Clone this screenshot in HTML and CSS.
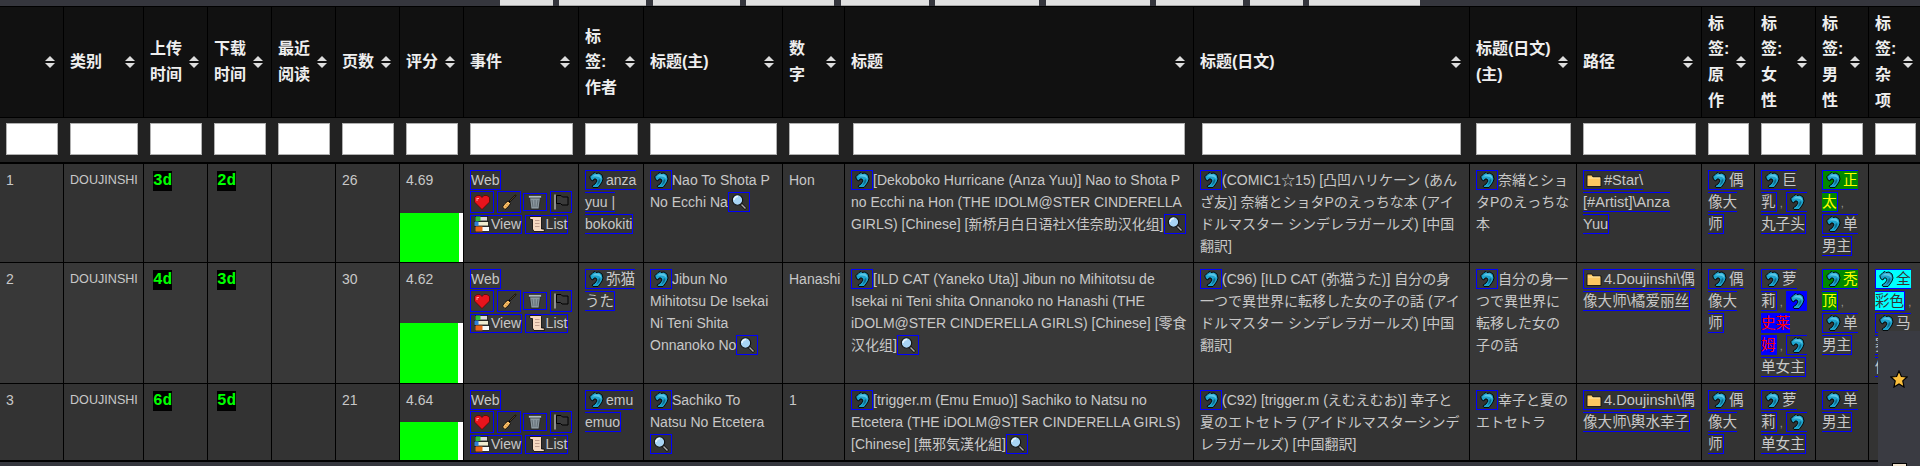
FILE: index.html
```html
<!DOCTYPE html>
<html lang="zh">

<head>
    <meta charset="UTF-8">
    <title>manga list</title>
    <link rel="stylesheet" href="styles.css">
</head>

<body>

    <svg class="defs" xmlns="http://www.w3.org/2000/svg">
        <symbol id="dolphin" viewBox="0 0 16 16">
            <path d="M2 4.5 L5 1.5 L7 0.5 L8 1.5 L11 1 L14 3 L15 7 L14 10 L12 13 L10 15.5 L5 15.5 L4 14 L7 12 L9 9 L8 7 L6 7 L5 9 L3 8 L2 6 Z" fill="#1da3cc" stroke="#000" stroke-width="0.9"/>
            <path d="M4 4.5 L7 2.5 L11 2.5 L13 4.5 L13.5 7 L11 5 L8 4.5 Z" fill="#5cc6e6"/>
            <path d="M11 7 L12.5 8 L11.5 11 L8.5 13.5 L10 10 Z" fill="#0d6a8c"/>
        </symbol>
        <symbol id="mag" viewBox="0 0 16 16">
            <circle cx="6.5" cy="6" r="5.2" fill="#a8d4f4" stroke="#111" stroke-width="1.1"/>
            <path d="M3 6 A3.5 3.5 0 0 1 7 2.5" fill="none" stroke="#eaf7ff" stroke-width="1.5"/>
            <path d="M10 10 L15 15" stroke="#111" stroke-width="3"/>
            <path d="M10.5 10.5 L14.5 14.5" stroke="#aaa" stroke-width="1.4"/>
        </symbol>
        <symbol id="heart" viewBox="0 0 16 16">
            <path d="M8 15.5 L0.5 8 V3.5 L3 1.5 H6 L8 3.5 L10 1.5 H13 L15.5 3.5 V8 Z" fill="#e8141c" stroke="#500" stroke-width="0.7"/>
            <path d="M2.5 4 H5 V5 H3.5 V7 H2.5 Z" fill="#ff9a9a"/>
        </symbol>
        <symbol id="broom" viewBox="0 0 16 16">
            <path d="M15 1 L8 8" stroke="#000" stroke-width="1.6"/>
            <path d="M14.5 1.5 L9 7" stroke="#8a6a38" stroke-width="0.6"/>
            <path d="M7 7 L9.5 9.5 L7 13 L4 15.5 L1.5 13 L4 9.5 Z" fill="#f8bc66" stroke="#000" stroke-width="0.8"/>
            <path d="M5.5 10 L7 11.5 M4.5 12 L5.5 13.5" stroke="#b87c28" stroke-width="0.8"/>
        </symbol>
        <symbol id="trash" viewBox="0 0 16 16">
            <path d="M2.5 3 H13.5 L12 15 H4 Z" fill="#8b989f" stroke="#222" stroke-width="0.8"/>
            <path d="M1.5 1.5 H14.5 V4 H1.5 Z" fill="#aeb9be" stroke="#222" stroke-width="0.6"/>
            <path d="M5 6 L6 13 M8 6 V13 M11 6 L10 13" stroke="#5c686f" stroke-width="0.9"/>
        </symbol>
        <symbol id="flag" viewBox="0 0 16 16">
            <path d="M2 0.5 V15.5" stroke="#c4c4c4" stroke-width="1.3"/>
            <path d="M3.5 1.5 H8 L9.5 3 H15 V11 H9 L7.5 9.5 H3.5 Z" fill="#3a3a3a" stroke="#000" stroke-width="1"/>
        </symbol>
        <symbol id="books" viewBox="0 0 16 16">
            <rect x="1.5" y="0.5" width="12" height="4.5" fill="#d8d8d8" stroke="#000" stroke-width="0.7"/>
            <rect x="1.5" y="0.5" width="5" height="4.5" fill="#2fb83a"/>
            <rect x="0.5" y="5.5" width="14" height="4.5" fill="#f0ecd0" stroke="#000" stroke-width="0.7"/>
            <rect x="0.5" y="5.5" width="4" height="4.5" fill="#2f7fd8"/>
            <rect x="1.5" y="10.5" width="14" height="5" fill="#f8f8f8" stroke="#000" stroke-width="0.7"/>
            <rect x="1.5" y="10.5" width="7" height="5" fill="#ea641c"/>
        </symbol>
        <symbol id="scroll" viewBox="0 0 16 16">
            <path d="M1 0.5 H12 L12.5 1.5 V13 H15 L15.5 15.5 H5 L3.5 13 V3.5 H1.5 L0.5 2 Z" fill="#f6d9c2" stroke="#000" stroke-width="0.8"/>
            <path d="M6 4.5 H10.5 M6 7.5 H10.5 M6 10.5 H10.5" stroke="#b98" stroke-width="0.9"/>
        </symbol>
        <symbol id="folder" viewBox="0 0 16 16">
            <path d="M1 3 H6 L7 5 H15 V14.5 H1 Z" fill="#fcc860" stroke="#111" stroke-width="0.9"/>
            <path d="M2 6 H14" stroke="#ffe6a8" stroke-width="1"/>
        </symbol>
        <symbol id="star" viewBox="0 0 18 18">
            <path d="M9 1 L11.4 6.5 L17 7 L12.8 10.9 L14 17 L9 13.9 L4 17 L5.2 10.9 L1 7 L6.6 6.5 Z" fill="#fbbf3c" stroke="#000" stroke-width="1.2"/>
        </symbol>
    </svg>

    <div class="topbar">
        <button class="tab w53"></button>
        <button class="tab w87"></button>
        <button class="tab w87"></button>
        <button class="tab w88"></button>
        <button class="tab w88"></button>
        <button class="tab w104"></button>
        <button class="tab w104"></button>
        <button class="tab w87"></button>
        <button class="tab w53"></button>
        <button class="tab w111"></button>
    </div>

    <table class="list">
        <colgroup>
            <col class="c64"><col class="c80"><col class="c64"><col class="c64"><col class="c64"><col class="c64"><col class="c64">
            <col class="c115"><col class="c65"><col class="c139"><col class="c62"><col class="c349"><col class="c276"><col class="c107">
            <col class="c125"><col class="c53"><col class="c61"><col class="c53"><col class="c53">
        </colgroup>
        <thead>
            <tr class="heads">
                <th><div class="th"><span></span><i class="sort"></i></div></th>
                <th><div class="th"><span>类别</span><i class="sort"></i></div></th>
                <th><div class="th"><span>上传时间</span><i class="sort"></i></div></th>
                <th><div class="th"><span>下载时间</span><i class="sort"></i></div></th>
                <th><div class="th"><span>最近阅读</span><i class="sort"></i></div></th>
                <th><div class="th"><span>页数</span><i class="sort"></i></div></th>
                <th><div class="th"><span>评分</span><i class="sort"></i></div></th>
                <th><div class="th"><span>事件</span><i class="sort"></i></div></th>
                <th><div class="th"><span>标签:作者</span><i class="sort"></i></div></th>
                <th><div class="th"><span>标题(主)</span><i class="sort"></i></div></th>
                <th><div class="th"><span>数<br>字</span><i class="sort"></i></div></th>
                <th><div class="th"><span>标题</span><i class="sort"></i></div></th>
                <th><div class="th"><span>标题(日文)</span><i class="sort"></i></div></th>
                <th><div class="th"><span>标题(日文)(主)</span><i class="sort"></i></div></th>
                <th><div class="th"><span>路径</span><i class="sort"></i></div></th>
                <th><div class="th"><span>标签:原作</span><i class="sort"></i></div></th>
                <th><div class="th"><span>标签:女性</span><i class="sort"></i></div></th>
                <th><div class="th"><span>标签:男性</span><i class="sort"></i></div></th>
                <th><div class="th"><span>标签:杂项</span><i class="sort"></i></div></th>
            </tr>
            <tr class="filters">
                <th><input></th><th><input></th><th><input></th><th><input></th><th><input></th><th><input></th><th><input></th>
                <th><input></th><th><input></th><th><input></th><th><input></th><th class="inset"><input></th><th class="inset"><input></th><th><input></th>
                <th><input></th><th><input></th><th><input></th><th><input></th><th><input></th>
            </tr>
        </thead>
        <tbody>
            <tr>
                <td>1</td>
                <td class="cat">DOUJINSHI</td>
                <td><span class="age">3d</span></td>
                <td><span class="age">2d</span></td>
                <td></td>
                <td>26</td>
                <td class="rate">4.69<div class="bar"><div class="fill" style="width: 93.8%"></div></div></td>
                <td>
                    <a class="box">Web</a>
                    <div class="acts">
                        <a class="act"><svg class="ico"><use href="#heart"/></svg></a>
                        <a class="act"><svg class="ico"><use href="#broom"/></svg></a>
                        <a class="act small"><svg class="ico"><use href="#trash"/></svg></a>
                        <a class="act thin"><svg class="ico"><use href="#flag"/></svg></a>
                    </div>
                    <div class="acts">
                        <a class="act wide"><svg class="ico"><use href="#books"/></svg>View</a>
                        <a class="act wide"><svg class="ico"><use href="#scroll"/></svg>List</a>
                    </div>
                </td>
                <td class="nw"><a class="box"><svg class="ico"><use href="#dolphin"/></svg>anza<br>yuu |<br>bokokiti</a></td>
                <td class="nw"><a class="box"><svg class="ico"><use href="#dolphin"/></svg></a>Nao To Shota P<br>No Ecchi Na<a class="box"><svg class="ico"><use href="#mag"/></svg></a></td>
                <td>Hon</td>
                <td class="nw"><a class="box"><svg class="ico"><use href="#dolphin"/></svg></a>[Dekoboko Hurricane (Anza Yuu)] Nao to Shota P<br>no Ecchi na Hon (THE IDOLM@STER CINDERELLA<br>GIRLS) [Chinese] [新桥月白日语社X佳奈助汉化组]<a class="box"><svg class="ico"><use href="#mag"/></svg></a></td>
                <td class="nw" lang="ja"><a class="box"><svg class="ico"><use href="#dolphin"/></svg></a>(COMIC1☆15) [凸凹ハリケーン (あん<br>ざ友)] 奈緒とショタPのえっちな本 (アイ<br>ドルマスター シンデレラガールズ) [中国<br>翻訳]</td>
                <td class="nw" lang="ja"><a class="box"><svg class="ico"><use href="#dolphin"/></svg></a>奈緒とショ<br>タPのえっちな<br>本</td>
                <td class="cjk nw"><a class="box"><svg class="ico"><use href="#folder"/></svg>#Star\<br>[#Artist]\Anza<br>Yuu</a></td>
                <td class="cjk"><a class="box"><svg class="ico"><use href="#dolphin"/></svg>偶像大师</a></td>
                <td class="cjk"><a class="box"><svg class="ico"><use href="#dolphin"/></svg>巨乳</a><span class="sep"> , </span><a class="box"><svg class="ico"><use href="#dolphin"/></svg><br>丸子头</a></td>
                <td class="cjk"><a class="box green"><svg class="ico"><use href="#dolphin"/></svg>正太</a><span class="sep"> , </span><a class="box"><svg class="ico"><use href="#dolphin"/></svg>单男主</a></td>
                <td></td>
            </tr>
            <tr>
                <td>2</td>
                <td class="cat">DOUJINSHI</td>
                <td><span class="age">4d</span></td>
                <td><span class="age">3d</span></td>
                <td></td>
                <td>30</td>
                <td class="rate">4.62<div class="bar"><div class="fill" style="width: 92.4%"></div></div></td>
                <td>
                    <a class="box">Web</a>
                    <div class="acts">
                        <a class="act"><svg class="ico"><use href="#heart"/></svg></a>
                        <a class="act"><svg class="ico"><use href="#broom"/></svg></a>
                        <a class="act small"><svg class="ico"><use href="#trash"/></svg></a>
                        <a class="act thin"><svg class="ico"><use href="#flag"/></svg></a>
                    </div>
                    <div class="acts">
                        <a class="act wide"><svg class="ico"><use href="#books"/></svg>View</a>
                        <a class="act wide"><svg class="ico"><use href="#scroll"/></svg>List</a>
                    </div>
                </td>
                <td class="cjk nw" lang="ja"><a class="box"><svg class="ico"><use href="#dolphin"/></svg>弥猫<br>うた</a></td>
                <td class="nw"><a class="box"><svg class="ico"><use href="#dolphin"/></svg></a>Jibun No<br>Mihitotsu De Isekai<br>Ni Teni Shita<br>Onnanoko No<a class="box"><svg class="ico"><use href="#mag"/></svg></a></td>
                <td>Hanashi</td>
                <td class="nw"><a class="box"><svg class="ico"><use href="#dolphin"/></svg></a>[ILD CAT (Yaneko Uta)] Jibun no Mihitotsu de<br>Isekai ni Teni shita Onnanoko no Hanashi (THE<br>iDOLM@STER CINDERELLA GIRLS) [Chinese] [零食<br>汉化组]<a class="box"><svg class="ico"><use href="#mag"/></svg></a></td>
                <td class="nw" lang="ja"><a class="box"><svg class="ico"><use href="#dolphin"/></svg></a>(C96) [ILD CAT (弥猫うた)] 自分の身<br>一つで異世界に転移した女の子の話 (アイ<br>ドルマスター シンデレラガールズ) [中国<br>翻訳]</td>
                <td class="nw" lang="ja"><a class="box"><svg class="ico"><use href="#dolphin"/></svg></a>自分の身一<br>つで異世界に<br>転移した女の<br>子の話</td>
                <td class="cjk nw"><a class="box"><svg class="ico"><use href="#folder"/></svg>4.Doujinshi\偶<br>像大师\橘爱丽丝</a></td>
                <td class="cjk"><a class="box"><svg class="ico"><use href="#dolphin"/></svg>偶像大师</a></td>
                <td class="cjk"><a class="box"><svg class="ico"><use href="#dolphin"/></svg>萝莉</a><span class="sep"> , </span><a class="box blue"><svg class="ico"><use href="#dolphin"/></svg><br>史莱<br>姆</a><span class="sep"> , </span><a class="box"><svg class="ico"><use href="#dolphin"/></svg><br>单女主</a></td>
                <td class="cjk"><a class="box green"><svg class="ico"><use href="#dolphin"/></svg>秃顶</a><span class="sep"> , </span><a class="box"><svg class="ico"><use href="#dolphin"/></svg>单男主</a></td>
                <td class="cjk"><a class="box cyan"><svg class="ico"><use href="#dolphin"/></svg>全彩色</a><span class="sep"> , </span><a class="box"><svg class="ico"><use href="#dolphin"/></svg>马赛克修正</a></td>
            </tr>
            <tr class="last">
                <td>3</td>
                <td class="cat">DOUJINSHI</td>
                <td><span class="age">6d</span></td>
                <td><span class="age">5d</span></td>
                <td></td>
                <td>21</td>
                <td class="rate">4.64<div class="bar"><div class="fill" style="width: 92.8%"></div></div></td>
                <td>
                    <a class="box">Web</a>
                    <div class="acts">
                        <a class="act"><svg class="ico"><use href="#heart"/></svg></a>
                        <a class="act"><svg class="ico"><use href="#broom"/></svg></a>
                        <a class="act small"><svg class="ico"><use href="#trash"/></svg></a>
                        <a class="act thin"><svg class="ico"><use href="#flag"/></svg></a>
                    </div>
                    <div class="acts">
                        <a class="act wide"><svg class="ico"><use href="#books"/></svg>View</a>
                        <a class="act wide"><svg class="ico"><use href="#scroll"/></svg>List</a>
                    </div>
                </td>
                <td class="nw"><a class="box"><svg class="ico"><use href="#dolphin"/></svg>emu<br>emuo</a></td>
                <td class="nw"><a class="box"><svg class="ico"><use href="#dolphin"/></svg></a>Sachiko To<br>Natsu No Etcetera<br><a class="box"><svg class="ico"><use href="#mag"/></svg></a></td>
                <td>1</td>
                <td class="nw"><a class="box"><svg class="ico"><use href="#dolphin"/></svg></a>[trigger.m (Emu Emuo)] Sachiko to Natsu no<br>Etcetera (THE iDOLM@STER CINDERELLA GIRLS)<br>[Chinese] [無邪気漢化組]<a class="box"><svg class="ico"><use href="#mag"/></svg></a></td>
                <td class="nw" lang="ja"><a class="box"><svg class="ico"><use href="#dolphin"/></svg></a>(C92) [trigger.m (えむえむお)] 幸子と<br>夏のエトセトラ (アイドルマスターシンデ<br>レラガールズ) [中国翻訳]</td>
                <td class="nw" lang="ja"><a class="box"><svg class="ico"><use href="#dolphin"/></svg></a>幸子と夏の<br>エトセトラ</td>
                <td class="cjk nw"><a class="box"><svg class="ico"><use href="#folder"/></svg>4.Doujinshi\偶<br>像大师\輿水幸子</a></td>
                <td class="cjk"><a class="box"><svg class="ico"><use href="#dolphin"/></svg>偶像大师</a></td>
                <td class="cjk"><a class="box"><svg class="ico"><use href="#dolphin"/></svg>萝莉</a><span class="sep"> , </span><a class="box"><svg class="ico"><use href="#dolphin"/></svg><br>单女主</a></td>
                <td class="cjk nw"><a class="box"><svg class="ico"><use href="#dolphin"/></svg>单<br>男主</a></td>
                <td></td>
            </tr>
        </tbody>
    </table>

    <div class="sidepanel">
        <svg class="star"><use href="#star"/></svg>
        <div class="sidepanel-next"></div>
    </div>

</body>

</html>
```

FILE: styles.css
```css
html,
body {
    margin: 0;
    padding: 0;
    height: 466px;
    overflow: hidden;
}

body {
    position: relative;
    background-color: #35363d;
    color: #c8c8c8;
    font-family: "Liberation Sans", "Noto Sans CJK SC", sans-serif;
    font-size: 14px;
    line-height: 22px;
}

.defs {
    display: none;
}

/* top tabs, only their lower edge is on screen */
.topbar {
    display: flex;
    justify-content: center;
    gap: 6.5px;
    height: 6px;
    overflow: hidden;
}

.tab {
    flex: none;
    height: 6px;
    padding: 0;
    background-color: #e0e0e0;
    border: none;
    border-bottom: 1px solid #a8a8a8;
}

.w53 { width: 53px; }
.w87 { width: 87px; }
.w88 { width: 88px; }
.w104 { width: 104px; }
.w111 { width: 111px; }

.list {
    table-layout: fixed;
    width: 1922px;
    border-collapse: separate;
    border-spacing: 0;
    border-top: 1px solid #000;
}

.c53 { width: 53px; }
.c61 { width: 61px; }
.c62 { width: 62px; }
.c64 { width: 64px; }
.c65 { width: 65px; }
.c80 { width: 80px; }
.c107 { width: 107px; }
.c115 { width: 115px; }
.c125 { width: 125px; }
.c139 { width: 139px; }
.c276 { width: 276px; }
.c349 { width: 349px; }

.heads th {
    height: 111px;
    padding: 0 8px 0 6px;
    box-sizing: border-box;
    background-color: #111;
    border-right: 1px solid #000;
    border-bottom: 1px solid #000;
    color: #eee;
    font-size: 16px;
    font-weight: bold;
    line-height: 25.6px;
    text-align: left;
}

.th {
    display: flex;
    align-items: center;
    justify-content: space-between;
    gap: 5px;
}

.sort {
    flex: none;
    display: flex;
    flex-direction: column;
    gap: 2px;
    width: 10px;
    align-items: center;
}

.sort::before,
.sort::after {
    content: "";
    width: 0;
    height: 0;
    border-left: 5px solid transparent;
    border-right: 5px solid transparent;
}

.sort::before {
    border-bottom: 5px solid #ddd;
}

.sort::after {
    border-top: 5px solid #ddd;
}

.filters th {
    padding: 5px 6px 7px;
    background-color: #222;
    border-bottom: 2px solid #000;
    font-weight: normal;
}

.filters th.inset {
    padding-left: 8px;
    padding-right: 9px;
}

.filters input {
    display: block;
    box-sizing: border-box;
    width: 100%;
    height: 32px;
    padding: 0;
    background-color: #fff;
    border: 1px solid #b0b0b0;
    border-radius: 0;
}

td {
    padding: 5px 6px;
    vertical-align: top;
    background-color: #333;
    border-right: 1px solid #000;
    border-bottom: 1px solid #000;
}

tbody tr:nth-child(2) td {
    background-color: #383838;
}

.last td {
    border-bottom-width: 2px;
}

.nw {
    white-space: nowrap;
}

.cat {
    font-size: 12.6px;
    white-space: nowrap;
}

.cjk {
    font-size: 14.6px;
}

.age {
    margin-left: 3px;
    padding: 1px 0;
    background-color: #000;
    color: #0f0;
    font-family: "Liberation Mono", monospace;
    font-size: 16px;
    font-weight: bold;
    line-height: 1;
}

.rate {
    position: relative;
}

.bar {
    position: absolute;
    left: 0;
    right: 0;
    bottom: 0;
    height: 50%;
    background-color: #fff;
}

.fill {
    height: 100%;
    background-color: #0f0;
}

.box {
    padding: 1px 0;
    border: 1px solid #00f;
}

.ico {
    width: 16px;
    height: 16px;
    margin: 0 2px;
    vertical-align: -3px;
}

.green {
    background-color: #080;
    color: #ff0;
}

.blue {
    background-color: #00f;
    color: #f00;
}

.cyan {
    background-color: #0ff;
    color: #333;
}

.sep {
    color: #999;
    font-size: 11px;
    line-height: 1;
}

.acts {
    display: flex;
    align-items: center;
    gap: 2.5px;
    height: 22px;
}

.act {
    display: flex;
    align-items: center;
    justify-content: center;
    box-sizing: border-box;
    width: 24px;
    height: 22px;
    border: 1px solid #00f;
}

.act .ico {
    margin: 0;
}

.act.small {
    height: 18px;
}

.act.thin {
    width: 22px;
}

.act.wide {
    width: auto;
    height: 19px;
    padding-left: 3px;
}

.act.wide .ico {
    margin-right: 1px;
}

/* floating side panel on top of the last column */
.sidepanel {
    position: absolute;
    top: 331px;
    right: 0;
    bottom: 0;
    width: 42px;
    display: flex;
    flex-direction: column;
    align-items: center;
    gap: 75px;
    padding-top: 39px;
    box-sizing: border-box;
    background-color: #3a3b42;
}

.star {
    flex: none;
    width: 18px;
    height: 18px;
}

.sidepanel-next {
    flex: none;
    width: 15px;
    height: 4px;
    background-color: #f2e4d0;
    border: 1px solid #000;
    box-sizing: border-box;
}
```
